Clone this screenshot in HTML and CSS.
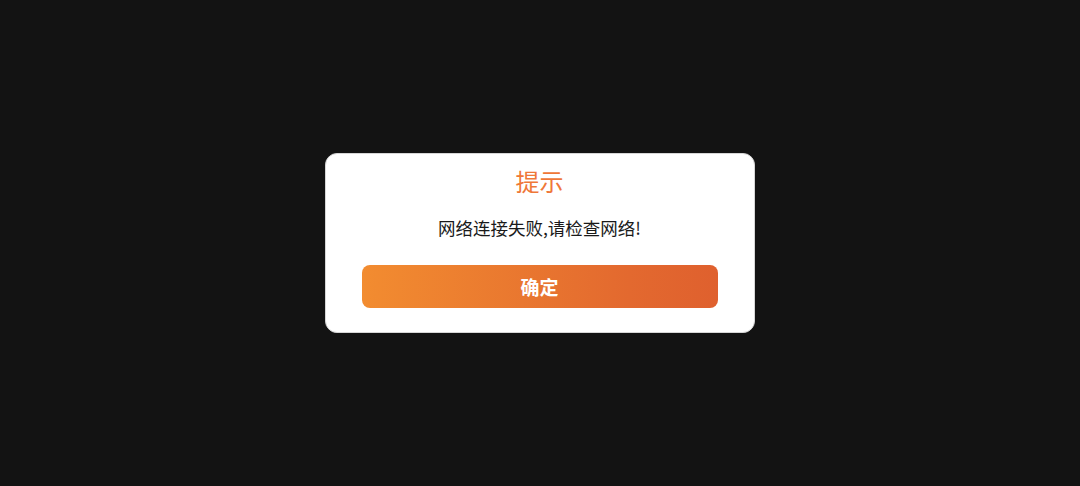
FILE: index.html
```html
<!DOCTYPE html>
<html lang="zh-CN">
<head>
<meta charset="utf-8">
<link rel="stylesheet" href="styles.css">
</head>
<body>
<div class="overlay">
  <div class="dialog">
    <div class="title">提示</div>
    <div class="message">网络连接失败,请检查网络!</div>
    <button class="confirm">确定</button>
  </div>
</div>
</body>
</html>
```
FILE: styles.css
```css
html, body {
  margin: 0;
  padding: 0;
  height: 100%;
  background: #131313;
  font-family: "Noto Sans CJK SC", "Noto Sans", sans-serif;
}
.overlay {
  height: 100%;
  display: flex;
  align-items: center;
  justify-content: center;
  padding-right: 1px;
  box-sizing: border-box;
}
.dialog {
  box-sizing: border-box;
  width: 430px;
  height: 180px;
  background: #ffffff;
  border: 1px solid #d6d6d6;
  border-radius: 12px;
  padding: 11px 36px 0;
  display: flex;
  flex-direction: column;
  align-items: center;
}
.title {
  font-size: 24px;
  line-height: 32px;
  color: #ef7738;
  font-weight: 400;
}
.message {
  margin-top: 19px;
  font-size: 17.5px;
  line-height: 24px;
  color: #1a1a1a;
}
.confirm {
  margin-top: 25px;
  width: 356px;
  height: 43px;
  border: none;
  border-radius: 8px;
  background: linear-gradient(90deg, #f28c30 0%, #e3692f 75%, #df602e 100%);
  color: #ffffff;
  font-family: inherit;
  font-size: 19px;
  font-weight: 600;
  padding: 0;
}
```
